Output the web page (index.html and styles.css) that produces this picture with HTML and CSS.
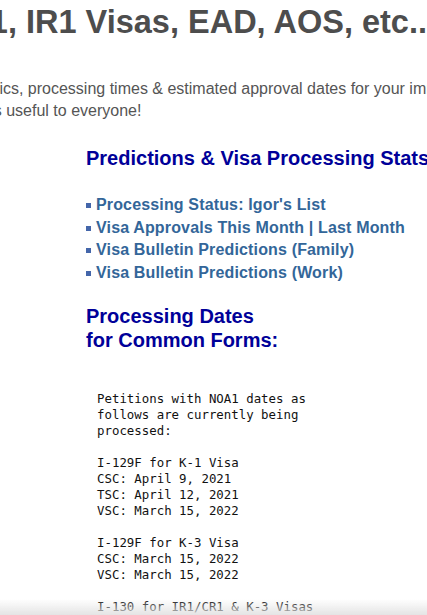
FILE: index.html
```html
<!DOCTYPE html>
<html lang="en">
<head>
  <meta charset="UTF-8">
  <title>K1, IR1 Visas, EAD, AOS, etc.. Live Stats</title>
  <meta name="viewport" content="width=device-width, initial-scale=1.0">
  <link rel="stylesheet" href="styles.css">
</head>
<body>
  <div class="page">
    <div class="title-row">
      <h1>Live Stats for K1, IR1 Visas, EAD, AOS, etc..</h1>
    </div>
    <p class="intro">
      Get the latest statistics, processing times &amp; estimated approval dates for your immigration case.<br>
      We truly hope this is useful to everyone!
    </p>

    <div class="content">
      <h3>Predictions &amp; Visa Processing Stats</h3>
      <ul class="links">
        <li><span><a href="#">Processing Status: Igor's List</a></span></li>
        <li><span><a href="#">Visa Approvals This Month</a> | <a href="#">Last Month</a></span></li>
        <li><span><a href="#">Visa Bulletin Predictions (Family)</a></span></li>
        <li><span><a href="#">Visa Bulletin Predictions (Work)</a></span></li>
      </ul>

      <h3 class="forms">Processing Dates<br>for Common Forms:</h3>
<pre class="dates">
Petitions with NOA1 dates as
follows are currently being
processed:

I-129F for K-1 Visa
CSC: April 9, 2021
TSC: April 12, 2021
VSC: March 15, 2022

I-129F for K-3 Visa
CSC: March 15, 2022
VSC: March 15, 2022

I-130 for IR1/CR1 &amp; K-3 Visas
CSC: March 15, 2022
</pre>
    </div>
  </div>
  <div class="fade"></div>
</body>
</html>
```

FILE: styles.css
```css
body {
  margin: 0;
  background: #fff;
  font-family: 'Liberation Sans', Arial, sans-serif;
  overflow: hidden;
}

.title-row {
  display: flex;
  justify-content: flex-end;
}

h1 {
  margin: 0;
  white-space: nowrap;
  font-size: 32.5px;
  line-height: 44px;
  color: #4d4d4d;
}

.intro {
  margin: 34px 0 0 -142px;
  width: 800px;
  font-size: 16px;
  line-height: 22px;
  color: #555;
}

.content {
  margin-left: 86px;
  white-space: nowrap;
}

h3 {
  margin: 24px 0 0;
  font-size: 20px;
  line-height: 24px;
  color: #000099;
}

h3.forms {
  margin-top: 19px;
}

.links {
  list-style: none;
  margin: 24px 0 0;
  padding: 0;
}

.links li {
  font-size: 16px;
  line-height: 22.7px;
  font-weight: bold;
  letter-spacing: 0.15px;
  color: #336699;
  display: flex;
  align-items: center;
  gap: 5px;
}

.links li::before {
  content: '';
  width: 5px;
  height: 5px;
  background: #4466aa;
  flex-shrink: 0;
}

.links li a {
  color: #336699;
  text-decoration: none;
}

.dates {
  margin: 39px 0 0 11px;
  font-family: 'DejaVu Sans Mono', 'Liberation Mono', monospace;
  font-size: 12.4px;
  line-height: 16px;
  color: #111;
}

.fade {
  position: fixed;
  left: 0;
  right: 0;
  bottom: 0;
  height: 16px;
  background: linear-gradient(to bottom, rgba(235, 235, 235, 0), rgba(225, 225, 225, 0.9));
}
```
